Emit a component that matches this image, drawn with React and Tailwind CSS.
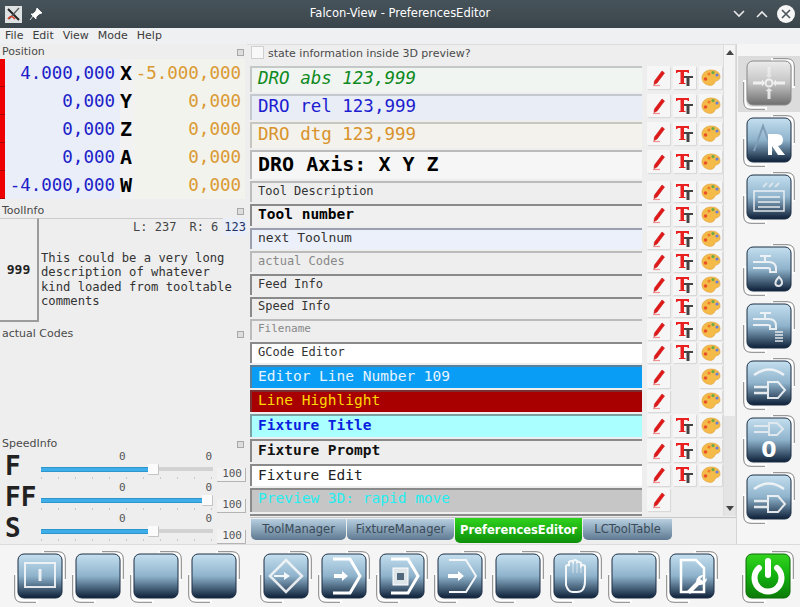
import React, { useId } from "react";

const ui = "font-['DejaVu_Sans',sans-serif]";
const mono = "font-['DejaVu_Sans_Mono',monospace]";

// Fila del editor de preferencias
const rows = [
  { label: "DRO abs 123,999", box: "h-[26px] pb-[4px] bg-[#f0f5f2] border-[#c4c8c6]", text: "text-[17.5px] italic text-[#0f8a1e]" },
  { label: "DRO rel 123,999", box: "h-[26px] pb-[4px] bg-[#e8edf6] border-[#c4c8d0]", text: "text-[17.5px] text-[#1c1cd0]" },
  { label: "DRO dtg 123,999", box: "h-[26px] pb-[4px] bg-[#f3f2ec] border-[#c8c6c0]", text: "text-[17.5px] text-[#d9932c]" },
  { label: "DRO Axis: X Y Z", box: "h-[29px] pb-[4px] bg-[#f6f6f6] border-[#bbbbbb]", text: "text-[20px] font-bold text-black" },
  { label: "Tool Description", box: "h-[21px] pb-[4px] bg-[#eeeeee] border-[#bbbbbb]", text: "text-[12px] text-[#333333]" },
  { label: "Tool number", box: "h-[22px] pb-[2px] bg-[#f0f0f0] border-[#8a8a8a]", text: "text-[14.5px] font-bold text-black" },
  { label: "next Toolnum", box: "h-[21px] pb-[3px] bg-[#ecf0fa] border-[#9aa0b0]", text: "text-[13px] text-[#333333]" },
  { label: "actual Codes", box: "h-[21px] pb-[4px] bg-[#eeeeee] border-[#bbbbbb]", text: "text-[12px] text-[#888888]" },
  { label: "Feed Info", box: "h-[21px] pb-[4px] bg-[#eeeeee] border-[#8a8a8a]", text: "text-[12px] text-[#333333]" },
  { label: "Speed Info", box: "h-[20px] pb-[4px] bg-[#eeeeee] border-[#8a8a8a]", text: "text-[12px] text-[#333333]" },
  { label: "Filename", box: "h-[21px] pb-[3px] bg-[#eeeeee] border-[#bbbbbb]", text: "text-[11px] text-[#888888]" },
  { label: "GCode Editor", box: "h-[21px] pb-[4px] bg-white border-[#8a8a8a]", text: "text-[12px] text-[#333333]" },
  { label: "Editor Line Number 109", box: "h-[23px] pb-[2px] bg-[#0a9df5] border-[#5a7f9a]", text: "text-[14.5px] text-[#e8f4fc]", noFont: true },
  { label: "Line Highlight", box: "h-[22px] pb-[2px] bg-[#a80000] border-[#7a3030]", text: "text-[14.5px] text-[#ffd800]", noFont: true },
  { label: "Fixture Title", box: "h-[23px] pb-[2px] bg-[#aaffff] border-[#7aa0a0]", text: "text-[14.5px] font-bold text-[#0a1ee0]" },
  { label: "Fixture Prompt", box: "h-[23px] pb-[2px] bg-[#eeeeee] border-[#8a8a8a]", text: "text-[14.5px] font-bold text-[#111111]" },
  { label: "Fixture Edit", box: "h-[22px] pb-[1px] bg-white border-[#8a8a8a]", text: "text-[14.5px] text-[#222222]" },
  { label: "Preview 3D: rapid move", box: "h-[24px] pb-[4px] bg-[#c6c6c6] border-[#8a8a8a]", text: "text-[14.5px] text-[#22eef0]", noFont: true, noColor: true },
];

const dro = [
  ["4.000,000", "X", "-5.000,000"],
  ["0,000", "Y", "0,000"],
  ["0,000", "Z", "0,000"],
  ["0,000", "A", "0,000"],
  ["-4.000,000", "W", "0,000"],
];

const sliders = [
  { name: "F", fill: "w-[107px]", rest: "w-[54px]" },
  { name: "FF", fill: "w-[161px]", rest: "w-0" },
  { name: "S", fill: "w-[107px]", rest: "w-[54px]" },
];

function Pencil() {
  return (
    <svg width="16" height="18" viewBox="0 0 16 18">
      <path d="M11 2 L13.5 4 L6 14 L3 15.5 L3.5 12 Z" fill="#e01818" stroke="#c81414" strokeWidth="0.6" />
      <path d="M2 16.5 H9" stroke="#f09090" strokeWidth="1.2" />
    </svg>
  );
}

function Fonts() {
  return (
    <svg width="20" height="18" viewBox="0 0 20 18">
      <path d="M8 7 H18 V9 H14.5 V17 H11.5 V9 H8 Z" fill="#444444" />
      <path d="M1 1 H14 V4 H13 L12 3 H9 V14 H10.5 V15 H4 V14 H5.5 V3 H3 L2 4 H1 Z" fill="#e82020" />
    </svg>
  );
}

function Palette() {
  return (
    <svg width="20" height="18" viewBox="0 0 20 18">
      <path d="M10 1 C16 1 19 4 19 8 C19 12 15 11 14 13 C13 16 10 17 7 16 C3 15 1 12 1 9 C1 4 5 1 10 1 Z" fill="#f4bb48" stroke="#e09a30" strokeWidth="0.6" />
      <circle cx="8" cy="5" r="1.6" fill="#ee7a2e" />
      <circle cx="12" cy="3.6" r="1.6" fill="#6aa84a" />
      <circle cx="16" cy="6" r="1.6" fill="#6a7fd8" />
      <circle cx="4.5" cy="10" r="1.8" fill="#e8502a" />
    </svg>
  );
}

function SmallBtn({ children }) {
  return (
    <div className="w-[23px] max-h-[23px] flex items-center justify-center bg-[#f6f6f6] shadow-[1px_1px_1px_#d6d6d6] rounded-[1px]">
      {children}
    </div>
  );
}

// Boton grande con degradado y arcos en las esquinas
function ToolButton({ tone = "blue", children }) {
  const id = useId();
  const stops = {
    blue: ["#c4dfef", "#8fb3cc", "#0d2038"],
    grey: ["#ececec", "#c4c4c4", "#6e6e6e"],
    green: ["#33d41e", "#12b010", "#0c7a08"],
  }[tone];
  return (
    <svg width="52" height="52" viewBox="0 0 52 52" className="shrink-0">
      <defs>
        <linearGradient id={id} x1="0" y1="0" x2="0" y2="1">
          <stop offset="0" stopColor={stops[0]} />
          <stop offset="0.5" stopColor={stops[1]} />
          <stop offset="1" stopColor={stops[2]} />
        </linearGradient>
      </defs>
      <path d="M28 1.5 H43 Q50.5 1.5 50.5 9 V30" fill="none" stroke="#ffffff" strokeWidth="3.5" />
      <path d="M30 0.7 H44 Q51.3 0.7 51.3 8 V28" fill="none" stroke="#555555" strokeWidth="1" opacity="0.75" />
      <path d="M1.5 22 V43 Q1.5 50.5 9 50.5 H24" fill="none" stroke="#ffffff" strokeWidth="3.5" />
      <path d="M0.7 24 V44 Q0.7 51.3 8 51.3 H22" fill="none" stroke="#555555" strokeWidth="1" opacity="0.75" />
      <rect x="4" y="3" width="44" height="44" rx="6" fill={`url(#${id})`} stroke={tone === "blue" ? "#1c2f45" : tone === "grey" ? "#8a8a8a" : "#0d6a08"} strokeWidth="1" />
      {children}
    </svg>
  );
}

const W = { fill: "none", stroke: "#f4f6f8", strokeWidth: 2, opacity: 0.9 };

const icons = {
  info: (
    <g {...W}>
      <rect x="11" y="12" width="30" height="24" />
      <path d="M26 18 V30" strokeWidth="3" />
    </g>
  ),
  center: (
    <g fill="#ffffff" opacity="0.75">
      <circle cx="26" cy="25" r="3.5" fill="none" stroke="#ffffff" strokeWidth="2" />
      <path d="M10 23.5 H19 V21.5 L22 25 L19 28.5 V26.5 H10 Z" />
      <path d="M42 23.5 H33 V21.5 L30 25 L33 28.5 V26.5 H42 Z" />
      <path d="M24.5 9 V17 H22.5 L26 20 L29.5 17 H27.5 V9 Z" opacity="0.6" />
      <path d="M24.5 41 V33 H22.5 L26 30 L29.5 33 H27.5 V41 Z" />
    </g>
  ),
  ref: (
    <g>
      <path d="M11 36 L20 11 L29 36" fill="none" stroke="#7f9db5" strokeWidth="2" />
      <path d="M25 19 H34 Q40 19 40 25 Q40 30 35 31 L42 40 H35 L29 31 V40 H25 Z" fill="#ffffff" />
    </g>
  ),
  clapper: (
    <g {...W} strokeWidth="1.5">
      <rect x="11" y="19" width="30" height="20" fill="none" />
      <path d="M15 25 H37 M15 30 H37 M15 35 H37" />
      <path d="M20 15 L24 11 M26 15 L30 11 M32 15 L36 11" stroke="#dfe8ee" strokeWidth="2" />
    </g>
  ),
  tapDrop: (
    <g {...W}>
      <path d="M10 18 H26 Q33 18 33 25 V28 H27 V25 Q27 24 25 24 H10" />
      <path d="M17 12 H28 M22 12 V18" />
      <path d="M36 33 Q41 38 38 41 A3.5 3.5 0 0 1 33 41 Q31 38 36 33 Z" fill="none" />
    </g>
  ),
  tapFlood: (
    <g {...W}>
      <path d="M10 18 H26 Q33 18 33 25 V28 H27 V25 Q27 24 25 24 H10" />
      <path d="M17 12 H28 M22 12 V18" />
      <path d="M32 31 H40 M32 34 H40 M32 37 H40 M32 40 H40" strokeWidth="1.6" />
    </g>
  ),
  plugArc: (
    <g {...W}>
      <path d="M11 17 Q26 6 41 17" strokeWidth="2.5" />
      <path d="M25 24 H35 L42 32 L35 40 H25 Z" />
      <path d="M25 29 H11 M25 35 H11" strokeWidth="2.5" />
    </g>
  ),
  plugZero: (
    <g>
      <path d="M26 8 H34 L40 14 L34 20 H26 Z M26 11 H11 M26 17 H11" fill="none" stroke="#dfe8ee" strokeWidth="2" />
      <text x="26" y="42" textAnchor="middle" fontFamily="DejaVu Sans" fontWeight="700" fontSize="22" fill="#ffffff">0</text>
    </g>
  ),
  run: (
    <g {...W}>
      <path d="M26 9 L42 25 L26 41 L10 25 Z" strokeWidth="2.5" />
      <path d="M14 24 H24 V21 L30 25 L24 29 V26 H14 Z" fill="#ffffff" stroke="none" />
    </g>
  ),
  step: (
    <g>
      <path d="M15 8 H32 L42 25 L32 42 H15" fill="none" stroke="#ffffff" strokeWidth="3" />
      <path d="M16 23 H24 V20 L30 25 L24 30 V27 H16 Z" fill="#ffffff" />
    </g>
  ),
  file: (
    <g>
      <path d="M15 8 H32 L42 25 L32 42 H15" fill="none" stroke="#ffffff" strokeWidth="3" />
      <rect x="17" y="17" width="15" height="17" fill="#dfe6ea" stroke="#ffffff" />
      <rect x="21" y="22" width="7" height="7" fill="#52687c" />
    </g>
  ),
  next: (
    <g>
      <path d="M15 9 H32 L42 25 L32 41 H15" fill="none" stroke="#f4f6f8" strokeWidth="2" />
      <path d="M14 23 H24 V20 L30 25 L24 30 V27 H14 Z" fill="#ffffff" />
    </g>
  ),
  hand: (
    <g fill="none" stroke="#f4f6f8" strokeWidth="2">
      <path d="M16 26 V15 Q18 13 19 15 V11 Q21 9 23 11 V10 Q25 8 27 10 V11 Q29 10 31 12 V15 Q33 13 35 15 V30 Q35 41 27 41 H23 Q18 41 16 34 Z" />
      <path d="M23 11 V22 M27 10 V22 M31 12 V22" strokeWidth="1" opacity="0.7" />
    </g>
  ),
  doc: (
    <g>
      <path d="M15 9 H30 L38 17 V41 H15 Z" fill="none" stroke="#ffffff" strokeWidth="2.5" />
      <path d="M38 24 A7 7 0 0 0 30 31 L21 40 L24 43 L33 34 A7 7 0 0 0 41 27 L37 30 L34 28 Z" fill="#ffffff" />
    </g>
  ),
  power: (
    <g fill="none" stroke="#ffffff" strokeWidth="6" strokeLinecap="round">
      <path d="M17 17 A13.5 13.5 0 1 0 35 17" />
      <path d="M26 10 V24" />
    </g>
  ),
};

function PanelTitle({ children, className = "" }) {
  return (
    <div className={`flex items-center justify-between pl-[2px] pr-[3px] pt-[2px] text-[11px] text-[#4a4a4a] ${ui} ${className}`}>
      <span>{children}</span>
      <span className="w-[7px] h-[7px] border border-[#a8a8a8] bg-[#dddddd]" />
    </div>
  );
}

export default function App() {
  return (
    <div className={`w-[800px] h-[607px] overflow-hidden bg-[#eeeeee] flex flex-col ${ui}`}>
      {/* Barra de titulo */}
      <div className="h-[28px] flex items-center bg-gradient-to-b from-[#47535a] to-[#3a444b] text-white">
        <div className="ml-[5px] w-[17px] h-[17px] bg-[#dfe2e2] flex items-center justify-center">
          <svg width="15" height="15" viewBox="0 0 15 15">
            <path d="M2 2 L13 13" stroke="#222222" strokeWidth="2" />
            <path d="M13 1 L3 12" stroke="#555555" strokeWidth="1.2" />
            <path d="M2 12 Q5 7 9 12" stroke="#d8402a" strokeWidth="1.6" fill="none" />
          </svg>
        </div>
        <svg width="14" height="14" viewBox="0 0 14 14" className="ml-[7px]">
          <path d="M8 1 L13 6 L10 7 L7 10 L7 12 L2 7 L4 7 L7 4 Z M4 9 L1 13" fill="#ffffff" stroke="#ffffff" strokeWidth="0.8" />
        </svg>
        <div className="flex-1 text-center text-[11.5px] ml-[24px]">Falcon-View - PreferencesEditor</div>
        <svg width="12" height="8" viewBox="0 0 12 8" className="mr-[11px]">
          <path d="M1 1 L6 6 L11 1" fill="none" stroke="#e8e8e8" strokeWidth="1.6" />
        </svg>
        <svg width="12" height="8" viewBox="0 0 12 8" className="mr-[9px]">
          <path d="M1 7 L6 2 L11 7" fill="none" stroke="#e8e8e8" strokeWidth="1.6" />
        </svg>
        <svg width="18" height="18" viewBox="0 0 18 18" className="mr-[5px]">
          <circle cx="9" cy="9" r="9" fill="#f6f6f6" />
          <path d="M5 5 L13 13 M13 5 L5 13" stroke="#4a5258" strokeWidth="1.6" />
        </svg>
      </div>

      {/* Menu */}
      <div className="h-[16px] flex items-center gap-[9px] pl-[5px] text-[11px] text-[#3c3c3c] bg-[#eff0f1]">
        <span>File</span>
        <span>Edit</span>
        <span>View</span>
        <span>Mode</span>
        <span>Help</span>
      </div>

      <div className="h-[500px] flex">
        {/* Panel izquierdo */}
        <div className="w-[247px] shrink-0 flex flex-col">
          <PanelTitle className="h-[15px]">Position</PanelTitle>
          <div className="flex flex-col">
            {dro.map(([abs, axis, dtg]) => (
              <div key={axis} className={`h-[28px] flex items-center ${mono}`}>
                <div className="w-[5px] h-full bg-[#ee0000] border-b border-[#aa0000]" />
                <div className="w-[115px] h-full bg-[#e9eef8] flex items-center justify-end pr-[5px] text-[17.5px] text-[#2020c8]">{abs}</div>
                <div className="w-[15px] h-full bg-[#f2f2f2] flex items-center justify-start text-[20px] font-bold text-black">{axis}</div>
                <div className="w-[110px] h-full bg-[#f3f3ee] flex items-center justify-end pr-[4px] text-[17.5px] text-[#da9a32]">{dtg}</div>
              </div>
            ))}
          </div>

          <PanelTitle className="h-[15px] mt-[4px]">ToolInfo</PanelTitle>
          <div className={`h-[104px] flex ${mono}`}>
            <div className="w-[39px] shrink-0 flex items-center justify-center bg-[#efefef] border-r-2 border-b-2 border-[#9c9c9c] border-t border-t-[#cccccc] text-[13px] font-bold text-[#222222]">999</div>
            <div className="flex-1 flex flex-col">
              <div className="h-[17px] flex items-center justify-end text-[12px] text-[#444444] border-t border-[#cccccc]">
                <span className="mr-[13px]">L: 237</span>
                <span className="mr-[5px]">R: 6</span>
                <span className="bg-[#e9eef8] text-[#223366] px-[1px]">123</span>
              </div>
              <div className="mt-[16px] pl-[2px] text-[12.2px] leading-[14.3px] text-[#333333]">
                This could be a very long
                <br />
                description of whatever
                <br />
                kind loaded from tooltable
                <br />
                comments
              </div>
            </div>
          </div>

          <PanelTitle className="h-[14px] mt-[4px]">actual Codes</PanelTitle>
          <div className="h-[96px]" />

          <PanelTitle className="h-[15px]">SpeedInfo</PanelTitle>
          <div className={`flex flex-col ${mono}`}>
            {sliders.map((s) => (
              <div key={s.name} className="h-[31px] flex">
                <div className="w-[41px] shrink-0 pl-[5px] pt-[1px] text-[26px] leading-[28px] font-bold text-[#222222]">{s.name}</div>
                <div className="w-[172px] shrink-0 flex flex-col">
                  <div className="flex justify-between pl-[78px] pr-[1px] h-[12px] text-[11px] leading-[12px] text-[#555555]">
                    <span>0</span>
                    <span>0</span>
                  </div>
                  <div className="flex items-center h-[12px]">
                    <div className={`${s.fill} h-[5px] bg-[#3daee9] border-y border-[#2f96cc]`} />
                    <div className="w-[11px] h-[11px] bg-[#fbfbfb] border-r border-b border-[#c4c4c4] rounded-[1px]" />
                    <div className={`${s.rest} h-[4px] bg-[#d2d2d2]`} />
                  </div>
                  <div className="mt-[2px] h-[2px] bg-[repeating-linear-gradient(90deg,#c8c8c8_0,#c8c8c8_1px,transparent_1px,transparent_17px)]" />
                </div>
                <div className="w-[29px] ml-[4px] mt-[17px] h-[14px] flex items-center justify-end pr-[3px] bg-[#f2f2f2] border-r border-b border-[#b4b4b4] text-[11px] text-[#555555]">100</div>
              </div>
            ))}
          </div>
        </div>

        {/* Lista de estilos */}
        <div className="flex-1 flex flex-col pl-[3px] border-t border-[#dddddd]">
          <div className="h-[471px] flex">
            <div className="w-[473px] flex flex-col overflow-hidden">
              <div className="h-[21px] shrink-0 flex items-start pt-[1px] gap-[4px] pl-[1px] text-[11px] text-[#4a4a4a]">
                <span className="w-[13px] h-[13px] bg-[#f8f8f8] border border-[#cfcfcf]" />
                <span>state information inside 3D preview?</span>
              </div>
              <div className="flex flex-col gap-[2px]">
                {rows.map((r) => (
                  <div key={r.label} className="flex items-start">
                    <div className={`w-[392px] shrink-0 flex items-center pl-[6px] border-l-2 border-t-2 ${r.box}`}>
                      <span className={`${mono} whitespace-nowrap ${r.text}`}>{r.label}</span>
                    </div>
                    <div className={`ml-[5px] flex gap-[3px] ${r.box.split(" ")[0]}`}>
                      <SmallBtn><Pencil /></SmallBtn>
                      {r.noFont ? <div className="w-[23px]" /> : <SmallBtn><Fonts /></SmallBtn>}
                      {r.noColor ? <div className="w-[23px]" /> : <SmallBtn><Palette /></SmallBtn>}
                    </div>
                  </div>
                ))}
                <div className="h-[4px] w-[392px] border-t-2 border-[#8a8a8a] bg-[#eeeeee]" />
              </div>
            </div>
            {/* Scrollbar */}
            <div className="w-[13px] shrink-0 flex flex-col bg-[#e4e4e4] border-x border-[#dddddd]">
              <div className="h-[371px] bg-[#f4f4f4] flex justify-center pt-[5px]">
                <svg width="8" height="5" viewBox="0 0 8 5"><path d="M4 0 L8 5 H0 Z" fill="#444444" /></svg>
              </div>
              <div className="flex-1 flex items-end justify-center pb-[5px]">
                <svg width="8" height="5" viewBox="0 0 8 5"><path d="M0 0 H8 L4 5 Z" fill="#444444" /></svg>
              </div>
            </div>
          </div>

          {/* Pestanas */}
          <div className="mt-[1px] flex gap-[1px] pl-[1px] border-t border-[#c8c8c8] text-[11.5px] text-[#3a4a58]">
            <div className="w-[95px] h-[21px] mt-[1px] flex items-center justify-center rounded-b-[5px] bg-gradient-to-b from-[#b7cfe0] to-[#5f7a92]">ToolManager</div>
            <div className="w-[107px] h-[21px] mt-[1px] flex items-center justify-center rounded-b-[5px] bg-gradient-to-b from-[#b7cfe0] to-[#5f7a92]">FixtureManager</div>
            <div className="w-[127px] h-[25px] flex items-center justify-center rounded-b-[5px] bg-gradient-to-b from-[#2ed21c] to-[#0c8f0a] text-white font-bold">PreferencesEditor</div>
            <div className="w-[89px] h-[21px] mt-[1px] flex items-center justify-center rounded-b-[5px] bg-gradient-to-b from-[#b7cfe0] to-[#5f7a92]">LCToolTable</div>
          </div>
        </div>

        {/* Barra derecha */}
        <div className="w-[64px] shrink-0 flex flex-col items-center bg-[#f5f5f5] border-l border-[#d4d4d4] pt-[14px] gap-[5px]">
          <div className="flex flex-col items-center gap-[5px]">
            <div className="w-[62px] h-[56px] -my-[2px] flex items-center justify-center bg-[#dcdcdc]">
              <ToolButton tone="grey">{icons.center}</ToolButton>
            </div>
            <ToolButton>{icons.ref}</ToolButton>
            <ToolButton>{icons.clapper}</ToolButton>
          </div>
          <div className="mt-[15px] flex flex-col items-center gap-[5px]">
            <ToolButton>{icons.tapDrop}</ToolButton>
            <ToolButton>{icons.tapFlood}</ToolButton>
            <ToolButton>{icons.plugArc}</ToolButton>
            <ToolButton>{icons.plugZero}</ToolButton>
            <ToolButton>{icons.plugArc}</ToolButton>
          </div>
        </div>
      </div>

      {/* Barra inferior */}
      <div className="flex-1 flex items-start pt-[6px] pl-[14px] bg-[#f5f5f5] border-t border-[#dcdcdc]">
        <div className="flex gap-[6px]">
          <ToolButton>{icons.info}</ToolButton>
          <ToolButton />
          <ToolButton />
          <ToolButton />
        </div>
        <div className="ml-[20px] flex gap-[6px]">
          <ToolButton>{icons.run}</ToolButton>
          <ToolButton>{icons.step}</ToolButton>
          <ToolButton>{icons.file}</ToolButton>
          <ToolButton>{icons.next}</ToolButton>
          <ToolButton />
          <ToolButton>{icons.hand}</ToolButton>
          <ToolButton />
          <ToolButton>{icons.doc}</ToolButton>
        </div>
        <div className="ml-[24px]">
          <ToolButton tone="green">{icons.power}</ToolButton>
        </div>
      </div>
    </div>
  );
}
